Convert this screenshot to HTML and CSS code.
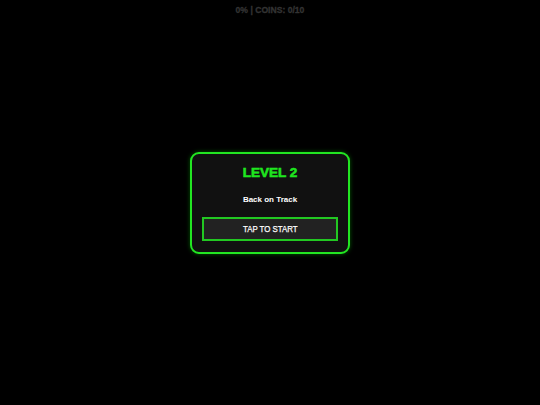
FILE: index.html
```html
<!DOCTYPE html>
<html>
<head>
<meta charset="utf-8">
<link rel="stylesheet" href="styles.css">
</head>
<body>
<div class="hud">0% | COINS: 0/10</div>
<div class="stage">
  <div class="card">
    <h1 class="title">LEVEL 2</h1>
    <p class="subtitle">Back on Track</p>
    <button class="start"><span class="start-label">TAP TO START</span></button>
  </div>
</div>
</body>
</html>
```
FILE: styles.css
```css
html, body {
  margin: 0;
  padding: 0;
  width: 540px;
  height: 405px;
  background: #000;
  overflow: hidden;
  font-family: "Liberation Sans", Arial, sans-serif;
}
body {
  display: flex;
  flex-direction: column;
}
.hud {
  text-align: center;
  color: #333;
  font-weight: bold;
  font-size: 8.6px;
  line-height: 10px;
  padding-top: 5px;
  height: 10px;
  -webkit-text-stroke: 0.3px #333;
}
.stage {
  flex: 1;
  display: flex;
  justify-content: center;
  align-items: center;
  padding-bottom: 15px;
}
.card {
  width: 136px;
  background: #111;
  border: 2px solid #22e622;
  border-radius: 9px;
  box-shadow: 0 0 4px rgba(0, 255, 0, 0.35);
  padding: 11px 10px 11px 10px;
  display: flex;
  flex-direction: column;
  align-items: center;
}
.title {
  margin: 0;
  color: #1fe61f;
  font-size: 13.5px;
  font-weight: 900;
  line-height: 16px;
  -webkit-text-stroke: 0.6px #1fe61f;
}
.subtitle {
  margin: 14px 0 0;
  color: #fff;
  font-size: 8px;
  font-weight: bold;
  line-height: 10px;
}
.start {
  margin-top: 12px;
  width: 136px;
  height: 24px;
  background: #222;
  border: 2px solid #22c822;
  color: #fff;
  font-family: "Liberation Sans", Arial, sans-serif;
  font-size: 9.6px;
  padding: 0;
  display: flex;
  justify-content: center;
  align-items: center;
}
.start-label {
  display: inline-block;
  transform: scaleX(0.82);
  -webkit-text-stroke: 0.25px #fff;
  white-space: nowrap;
}
```
